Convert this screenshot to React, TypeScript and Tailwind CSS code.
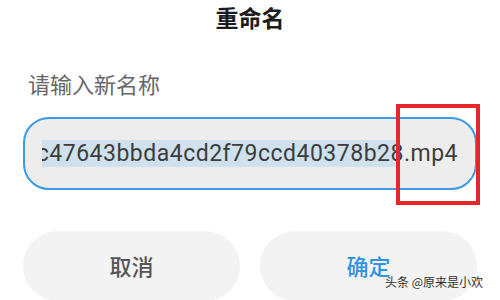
export default function App() {
  const cjk = { fontFamily: '"Noto Sans CJK SC", "Noto Sans", sans-serif' };
  return (
    <div className="relative w-[500px] h-[300px] overflow-hidden bg-white" style={cjk}>
      {/* Title */}
      <div className="pt-[6px] text-center text-[23px] leading-[23px] font-bold text-[#1c1c1c]">重命名</div>

      {/* Label */}
      <div className="mt-[43px] pl-[28px] text-[22px] leading-[22px] text-[#666666]">请输入新名称</div>

      {/* Input */}
      <div className="mt-[23px] px-[23px]">
        <div className="h-[73px] rounded-[26px] border-2 border-[#3b9be6] bg-[#ededed] flex items-center pl-[17px] pr-[17px]">
          <div className="flex-1 overflow-hidden flex justify-end whitespace-nowrap">
            <span
              className="text-[23px] leading-[29px] tracking-[0.5px] text-[#3c3c3c]"
              style={{ fontFamily: 'Roboto, "Noto Sans", sans-serif' }}
            >
              <span className="bg-[#cfe1ec]">e1c47643bbda4cd2f79ccd40378b2</span>
              <span className="bg-[linear-gradient(90deg,#cfe1ec_45%,transparent_45%)]">8</span>
              .mp4
            </span>
          </div>
        </div>
      </div>

      {/* Buttons */}
      <div className="mt-[41px] px-[23px] grid grid-cols-2 gap-5">
        <button className="h-[70px] rounded-full bg-[#f3f3f3] pb-[2px] text-[22px] font-medium text-[#555555]">取消</button>
        <button className="h-[70px] rounded-full bg-[#f3f3f3] pb-[2px] text-[22px] font-medium text-[#2f92e4]">确定</button>
      </div>

      {/* Red highlight box */}
      <div className="absolute left-[396px] top-[104px] w-[84px] h-[101px] border-[4px] border-[#e5262b]" />

      {/* Watermark */}
      <div
        className="absolute left-[385px] top-[275px] text-[12px] leading-[14px] text-[#2a2a2a] whitespace-nowrap"
        style={{ textShadow: "0 0 2px #fff, 0 0 2px #fff" }}
      >
        头条 @原来是小欢
      </div>
    </div>
  );
}
